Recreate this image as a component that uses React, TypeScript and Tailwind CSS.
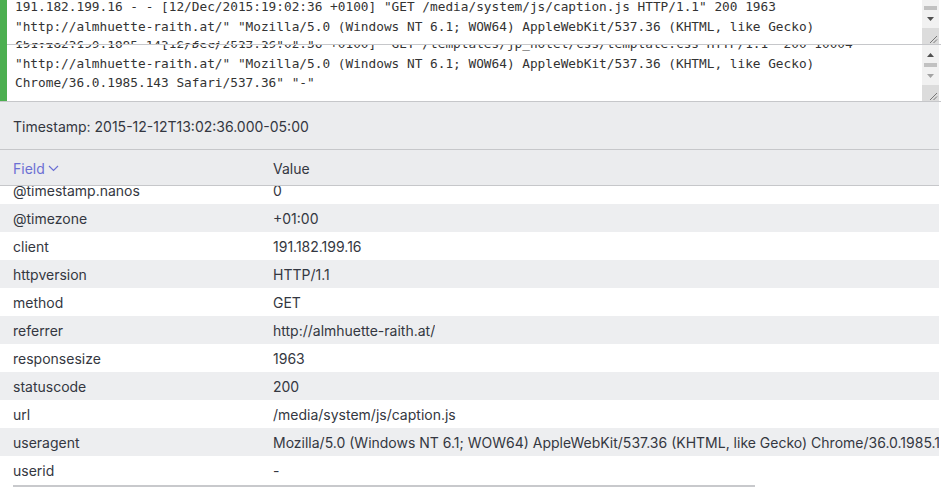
const logA = [
  '191.182.199.16 - - [12/Dec/2015:19:02:36 +0100] "GET /media/system/js/caption.js HTTP/1.1" 200 1963',
  '"http://almhuette-raith.at/" "Mozilla/5.0 (Windows NT 6.1; WOW64) AppleWebKit/537.36 (KHTML, like Gecko)',
  'Chrome/36.0.1985.143 Safari/537.36" "-"',
];

const logB = [
  '191.182.199.16 - - [12/Dec/2015:19:02:36 +0100] "GET /templates/jp_hotel/css/template.css HTTP/1.1" 200 10004',
  '"http://almhuette-raith.at/" "Mozilla/5.0 (Windows NT 6.1; WOW64) AppleWebKit/537.36 (KHTML, like Gecko)',
  'Chrome/36.0.1985.143 Safari/537.36" "-"',
];

const fields: [string, string][] = [
  ["@timestamp.nanos", "0"],
  ["@timezone", "+01:00"],
  ["client", "191.182.199.16"],
  ["httpversion", "HTTP/1.1"],
  ["method", "GET"],
  ["referrer", "http://almhuette-raith.at/"],
  ["responsesize", "1963"],
  ["statuscode", "200"],
  ["url", "/media/system/js/caption.js"],
  [
    "useragent",
    "Mozilla/5.0 (Windows NT 6.1; WOW64) AppleWebKit/537.36 (KHTML, like Gecko) Chrome/36.0.1985.143 Safari/537.36",
  ],
  ["userid", "-"],
];

const Arrow = ({ up, light }: { up?: boolean; light?: boolean }) => (
  <svg width="17" height="4" viewBox="0 0 17 4" className="block">
    <polygon
      points={up ? "5,4 12,4 8.5,0" : "5,0 12,0 8.5,4"}
      fill={light ? "#a3a3a3" : "#505050"}
    />
  </svg>
);

const Grip = () => (
  <div className="h-[16px] bg-[#dcdcdc]">
    <svg width="17" height="16" viewBox="0 0 17 16" className="block">
      <line x1="8" y1="15" x2="15" y2="8" stroke="#777" strokeWidth="1" />
      <line x1="11.5" y1="15" x2="15" y2="11.5" stroke="#777" strokeWidth="1" />
    </svg>
  </div>
);

const LogText = ({ lines, offset }: { lines: string[]; offset: string }) => (
  <div className="flex-1 overflow-hidden pl-[8px]">
    <div
      className={`${offset} font-['DejaVu_Sans_Mono',monospace] text-[12.77px] leading-[19.5px] text-[#333] whitespace-pre`}
    >
      {lines.map((l, i) => (
        <div key={i}>{l}</div>
      ))}
    </div>
  </div>
);

export default function App() {
  return (
    <div className="w-[941px] h-[488px] overflow-hidden bg-white font-['Inter',sans-serif] text-[14px] text-[#343741]">
      {/* log textareas */}
      <div className="flex border-b border-[#c6c7ca]">
        <div className="w-[7px] bg-[#4caf50]" />
        <div className="flex-1 flex flex-col">
          <div className="flex h-[45px] border-b border-[#c6c7ca]">
            <LogText lines={logA} offset="-mt-[3px]" />
            <div className="w-[17px] flex flex-col bg-[#f1f1f1]">
              <div className="mt-[6px] mx-[2px] h-[4px] bg-[#c1c1c1]" />
              <div className="mt-[7px]">
                <Arrow />
              </div>
              <div className="flex-1" />
              <Grip />
            </div>
            <div className="w-[2px]" />
          </div>
          <div className="flex h-[56px]">
            <LogText lines={logB} offset="-mt-[11px]" />
            <div className="w-[17px] flex flex-col bg-[#f1f1f1]">
              <div className="mt-[8px]">
                <Arrow up />
              </div>
              <div className="mt-[6px] mx-[2px] h-[4px] bg-[#c1c1c1]" />
              <div className="mt-[7px]">
                <Arrow light />
              </div>
              <div className="flex-1" />
              <Grip />
            </div>
            <div className="w-[2px]" />
          </div>
        </div>
      </div>

      {/* document details */}
      <div className="w-[939px]">
        <div className="h-[48px] flex items-center pt-[1px] px-[13px] bg-[#ebecee] border-b border-[#c6c7ca]">
          Timestamp: 2015-12-12T13:02:36.000-05:00
        </div>
        <div className="h-[36px] flex items-center pt-[1px] bg-[#ebecee] border-b border-[#c6c7ca]">
          <div className="w-[273px] pl-[13px] flex items-center gap-[3px] text-[#6b70d4]">
            Field
            <svg width="11" height="7" viewBox="0 0 11 7" className="mt-[1px]">
              <polyline points="1,1 5.5,5.5 10,1" fill="none" stroke="#6b70d4" strokeWidth="1.2" />
            </svg>
          </div>
          <div>Value</div>
        </div>
        <div className="h-[299px] overflow-hidden">
          <div className="-mt-[10px]">
            {fields.map(([k, v], i) => (
              <div
                key={k}
                className={`h-[28px] flex items-center whitespace-nowrap ${i % 2 === 1 ? "bg-[#edeef0]" : "bg-white"}`}
              >
                <div className="w-[273px] shrink-0 pl-[13px]">{k}</div>
                <div className="overflow-hidden">{v}</div>
              </div>
            ))}
          </div>
        </div>
        <div className="ml-[13px] w-[742px] h-[2px] bg-[#c8c9cc]" />
      </div>
    </div>
  );
}
